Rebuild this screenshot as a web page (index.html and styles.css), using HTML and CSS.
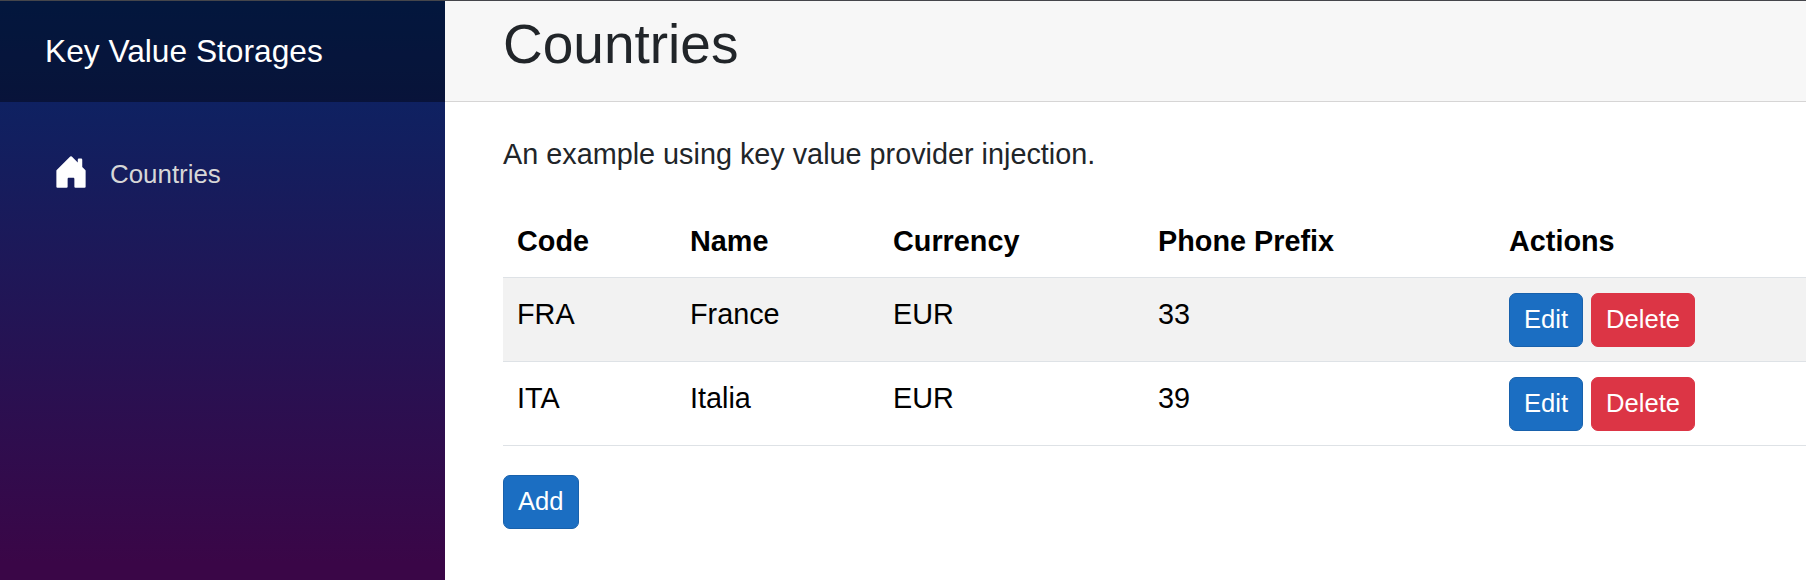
FILE: index.html
```html
<!DOCTYPE html>
<html lang="en">
<head>
<meta charset="utf-8">
<title>Countries</title>
<link rel="stylesheet" href="styles.css">
</head>
<body>
<div class="page">
  <aside class="sidebar">
    <div class="brand"><a class="brand-link">Key Value Storages</a></div>
    <nav class="nav">
      <a class="nav-link">
        <svg class="nav-icon" viewBox="0 0 16 16" fill="currentColor"><path d="M6.5 14.5v-3.505c0-.245.25-.495.5-.495h2c.25 0 .5.25.5.5v3.5a.5.5 0 0 0 .5.5h4a.5.5 0 0 0 .5-.5v-7a.5.5 0 0 0-.146-.354L13 5.793V2.5a.5.5 0 0 0-.5-.5h-1a.5.5 0 0 0-.5.5v1.293L8.354 1.146a.5.5 0 0 0-.708 0l-6 6A.5.5 0 0 0 1.5 7.5v7a.5.5 0 0 0 .5.5h4a.5.5 0 0 0 .5-.5Z"/></svg>
        <span>Countries</span>
      </a>
    </nav>
  </aside>
  <main class="main">
    <header class="top-row"><h1 class="title">Countries</h1></header>
    <article class="content">
      <p class="intro">An example using key value provider injection.</p>
      <table class="table">
        <colgroup><col class="col-code"><col class="col-name"><col class="col-currency"><col class="col-phone"><col></colgroup>
        <thead>
          <tr><th>Code</th><th>Name</th><th>Currency</th><th>Phone Prefix</th><th>Actions</th></tr>
        </thead>
        <tbody>
          <tr class="striped"><td>FRA</td><td>France</td><td>EUR</td><td>33</td>
            <td><div class="actions"><button class="btn primary">Edit</button><button class="btn danger">Delete</button></div></td></tr>
          <tr><td>ITA</td><td>Italia</td><td>EUR</td><td>39</td>
            <td><div class="actions"><button class="btn primary">Edit</button><button class="btn danger">Delete</button></div></td></tr>
        </tbody>
      </table>
      <button class="btn primary">Add</button>
    </article>
  </main>
</div>
</body>
</html>
```
FILE: styles.css
```css
* { box-sizing: border-box; }
body {
  margin: 0;
  font-family: "Liberation Sans", Arial, sans-serif;
  font-size: 28.8px;
  line-height: 43px;
  color: #212529;
  background: #fff;
  overflow: hidden;
}
.page { display: flex; height: 580px; border-top: 1px solid #45464b; }
.sidebar {
  flex: 0 0 445px;
  background: linear-gradient(180deg, rgb(5, 39, 103) 0%, #3a0647 97%);
}
.brand {
  display: flex;
  align-items: center;
  height: 101px;
  padding-left: 45px;
  background: rgba(0, 0, 0, 0.4);
}
.brand-link { font-size: 31.7px; color: #fff; }
.nav { padding: 43px 29px 0; }
.nav-link {
  display: flex;
  align-items: center;
  height: 58px;
  padding-left: 24px;
  gap: 21px;
  font-size: 25.9px;
  color: #d7d7d7;
}
.nav-icon { width: 36px; height: 36px; margin-bottom: 4px; color: #fff; }
.main { flex: 1; min-width: 0; }
.top-row {
  height: 101px;
  padding: 13px 0 0 58px;
  background: #f7f7f7;
  border-bottom: 1px solid #d6d5d5;
}
.title { margin: 0; font-size: 55px; font-weight: 400; line-height: 60px; }
.content { padding: 31px 0 0 58px; }
.intro { margin: 0 0 29px; }
.table {
  width: 1303px;
  margin-bottom: 29px;
  table-layout: fixed;
  border-collapse: collapse;
  color: #000;
}
.col-code { width: 173px; }
.col-name { width: 203px; }
.col-currency { width: 265px; }
.col-phone { width: 351px; }
.table th, .table td {
  padding: 15px 14px 14px;
  text-align: left;
  vertical-align: top;
  border-bottom: 1px solid #dee2e6;
}
.table th { font-weight: 700; }
.striped { background: #f2f2f2; }
.actions { display: flex; gap: 8px; }
.btn {
  display: block;
  height: 54px;
  padding: 0 14px 1px;
  font-family: inherit;
  font-size: 25.6px;
  line-height: 51px;
  color: #fff;
  border: 1px solid;
  border-radius: 7px;
}
.primary { background: #1b6ec2; border-color: #1861ac; }
.danger { background: #dc3545; border-color: #dc3545; }
```
